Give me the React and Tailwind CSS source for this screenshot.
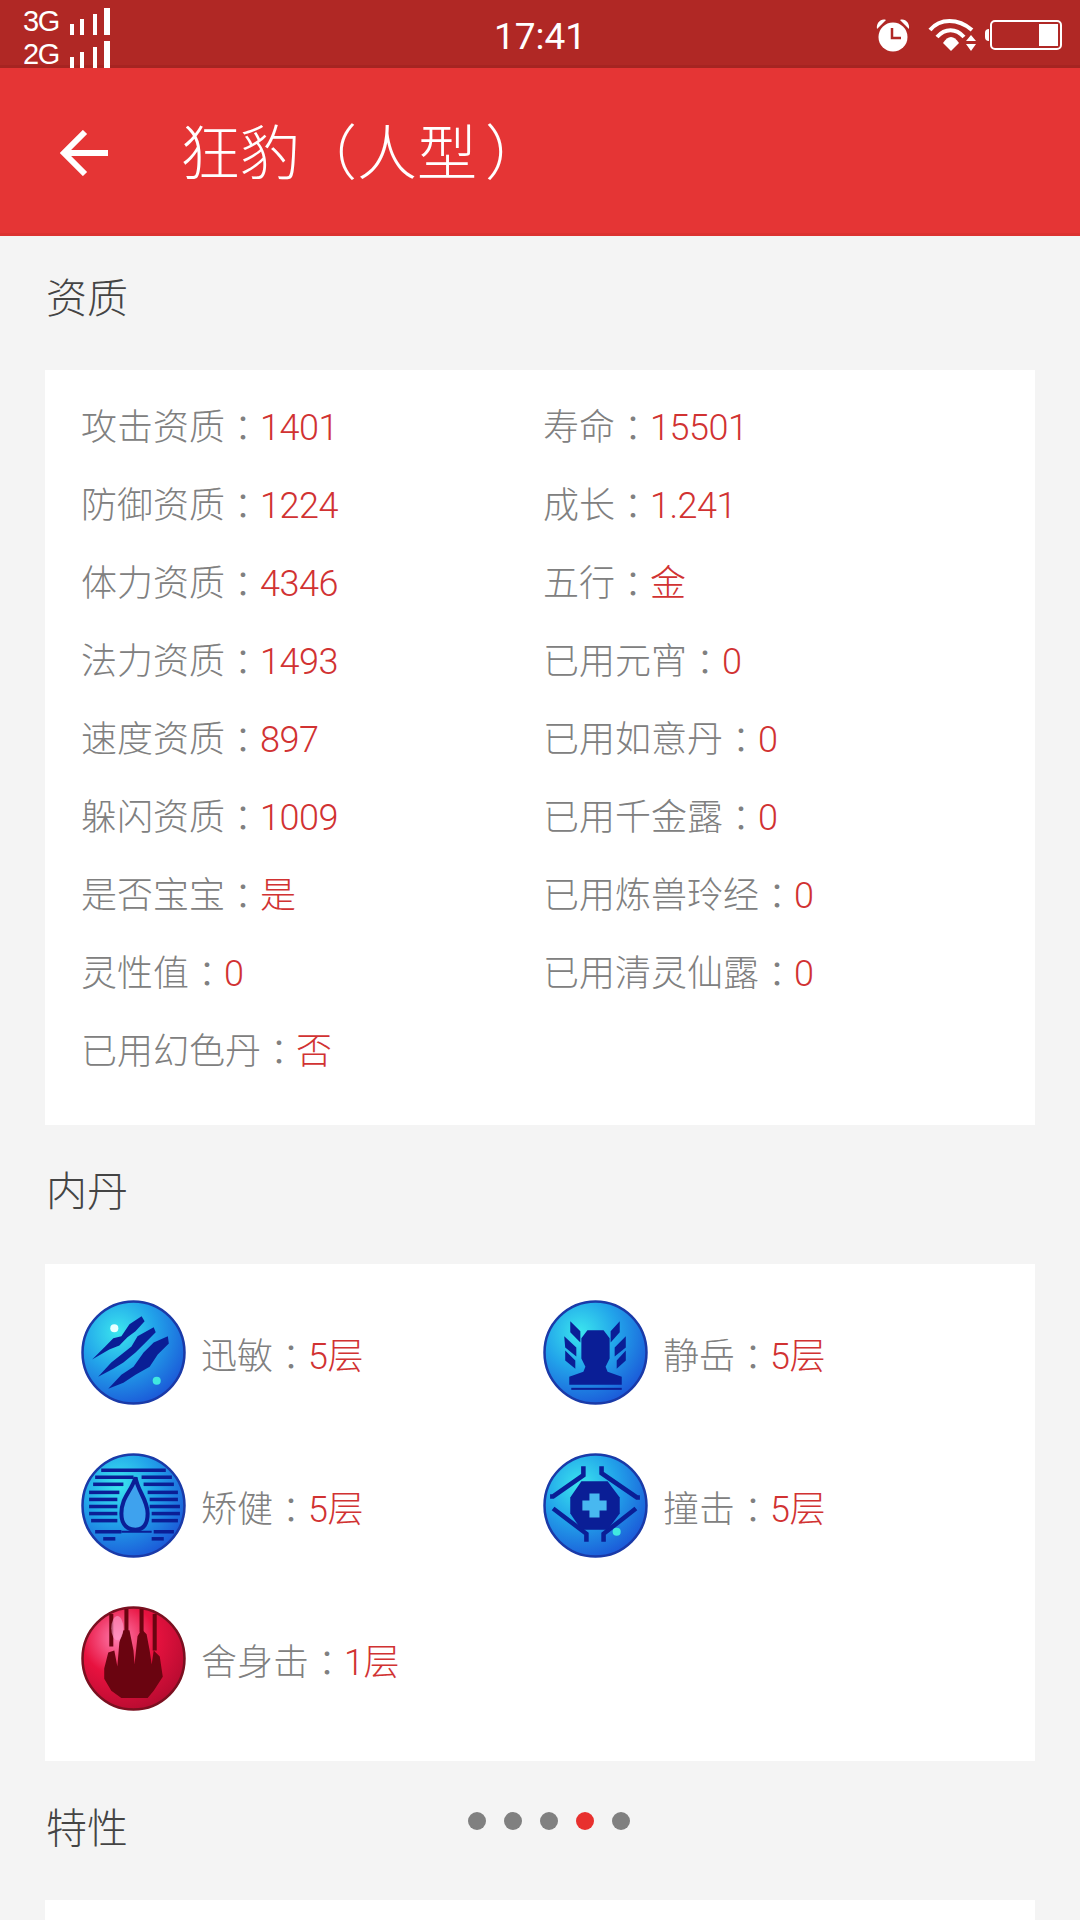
const STATS = [
  ['攻击资质', '1401', '寿命', '15501'],
  ['防御资质', '1224', '成长', '1.241'],
  ['体力资质', '4346', '五行', '金'],
  ['法力资质', '1493', '已用元宵', '0'],
  ['速度资质', '897', '已用如意丹', '0'],
  ['躲闪资质', '1009', '已用千金露', '0'],
  ['是否宝宝', '是', '已用炼兽玲经', '0'],
  ['灵性值', '0', '已用清灵仙露', '0'],
  ['已用幻色丹', '否'],
]

function Pair({ label, value }) {
  return (
    <div className="whitespace-nowrap">
      <span className="text-[#808080]">{label}</span>
      <span className="inline-block translate-y-[2px] -mr-[1px] text-[#808080] [font-family:'Noto_Sans_CJK_TC',sans-serif]">：</span>
      <span className="text-[#d13232] tracking-[-0.5px]">{value}</span>
    </div>
  )
}

function SectionTitle({ children, className = '' }) {
  return (
    <div className={`flex items-center pl-[46px] text-[41px] text-[#444444] ${className}`}>
      {children}
    </div>
  )
}

function Orb({ id, red, children }) {
  const stops = red
    ? ['#ff7fb0', '#e8123f', '#b00a2e']
    : ['#3be6ee', '#22a4ea', '#1a4fd6']
  return (
    <svg viewBox="0 0 104 104" className="w-[105px] h-[105px] shrink-0 blur-[0.6px]">
      <defs>
        <radialGradient id={id} cx="0.35" cy="0.3" r="0.8">
          <stop offset="0" stopColor={stops[0]} />
          <stop offset="0.45" stopColor={stops[1]} />
          <stop offset="1" stopColor={stops[2]} />
        </radialGradient>
      </defs>
      <circle cx="52" cy="52" r="50.5" fill={`url(#${id})`} stroke={red ? '#7a1020' : '#1a3aa8'} strokeWidth="2.5" />
      {children}
    </svg>
  )
}

const NAVY = '#0a1e96'

function ClawIcon() {
  return (
    <Orb id="orb-claw">
      <g fill={NAVY}>
        <path d="M11 59 L24 46 L32 38 L40 36 L48 24 L60 16 L63 21 L54 31 L46 37 L38 45 L28 49 Z" />
        <path d="M17 76 L30 62 L40 54 L50 46 L56 36 L72 27 L74 32 L64 42 L54 52 L42 62 L32 68 Z" />
        <path d="M27 88 L40 74 L52 66 L62 52 L72 42 L86 36 L87 43 L76 54 L68 66 L54 74 L42 82 Z" />
      </g>
      <circle cx="33" cy="28" r="4" fill="#e8ffff" />
      <circle cx="75" cy="80" r="4" fill="#40e8e0" />
    </Orb>
  )
}

function GuardIcon() {
  return (
    <Orb id="orb-guard">
      <g fill={NAVY}>
        <path d="M44 30 H60 L66 38 V58 L62 66 L64 71 L78 76 L78 84 H26 V76 L40 71 L42 66 L38 58 V38 Z" />
        <rect x="28" y="87" width="50" height="2" />
        <path d="M27 21 L37 31 V42 L27 32 Z M21 36 L33 47 V56 L22 47 Z M22 50 L32 60 V68 L22 60 Z" />
        <path d="M76 21 L67 31 V42 L76 32 Z M82 36 L71 47 V56 L82 47 Z M82 50 L73 60 V68 L82 60 Z" />
      </g>
    </Orb>
  )
}

function DropIcon() {
  const lines = [
    [20, 84, 17], [14, 52, 24], [60, 90, 24], [12, 42, 31], [62, 92, 31],
    [8, 38, 39], [66, 96, 39], [8, 36, 46], [68, 96, 46], [8, 36, 53],
    [68, 98, 53], [8, 36, 60], [70, 98, 60], [10, 36, 67], [70, 96, 67],
    [14, 40, 78], [72, 92, 78], [22, 34, 85], [70, 82, 85],
  ]
  return (
    <Orb id="orb-drop">
      <g stroke={NAVY} strokeWidth="3.5">
        {lines.map(([x1, x2, y]) => (
          <line key={`${x1}-${y}`} x1={x1} x2={x2} y1={y} y2={y} />
        ))}
        <line x1="40" x2="70" y1="78" y2="78" strokeWidth="2" />
      </g>
      <path d="M54 24 C50 38 40 44 40 60 C40 72 47 76 54 76 C62 76 66 70 66 60 C66 46 56 38 54 24 Z" fill="#3ea2ee" stroke={NAVY} strokeWidth="4" />
    </Orb>
  )
}

function ShieldIcon() {
  return (
    <Orb id="orb-shield">
      <g fill="none" stroke={NAVY} strokeWidth="4.5">
        <path d="M40 13 V22 L10 43 H7" />
        <path d="M58 13 V20 L93 44 H96" />
        <path d="M10 55 L43 80 V88" />
        <path d="M92 55 L60 80 V88" />
      </g>
      <path d="M38 28 H64 L76 44 V60 L64 76 H38 L27 60 V44 Z" fill={NAVY} />
      <path d="M46 40 H56 V47 H63 V57 H56 V64 H46 V57 H39 V47 H46 Z" fill="#48b8f0" />
      <circle cx="73" cy="78" r="4" fill="#40e8e0" />
    </Orb>
  )
}

function PawIcon() {
  return (
    <Orb id="orb-paw" red>
      <g fill="#6a0410">
        <path d="M28 8 H32 V40 H28 Z M43 3 H47 V26 H43 Z M58 3 H62 V26 H58 Z M71 8 H75 V44 H71 Z" />
        <path d="M23 62 L27 46 L33 44 L36 60 L38 36 L42 24 L48 24 L52 44 L53 58 L56 30 L60 23 L65 28 L68 44 L70 58 L72 44 L78 50 L81 70 L72 84 L66 91 H40 L30 84 L23 72 Z" />
      </g>
      <ellipse cx="36" cy="22" rx="6" ry="12" fill="#ff9ecb" opacity="0.6" />
    </Orb>
  )
}

const SKILLS = [
  { name: '迅敏', level: '5层', Icon: ClawIcon },
  { name: '静岳', level: '5层', Icon: GuardIcon },
  { name: '矫健', level: '5层', Icon: DropIcon },
  { name: '撞击', level: '5层', Icon: ShieldIcon },
  { name: '舍身击', level: '1层', Icon: PawIcon },
]

function StatusBar() {
  return (
    <div className="h-[68px] bg-[#b02825] border-b-[3px] border-[#a62421] grid grid-cols-[1fr_auto_1fr] items-center text-white">
      <div className="pl-[23px] pt-[2px] flex flex-col text-[29px] leading-[27px] tracking-[-1.5px] font-normal [font-family:'Liberation_Sans',sans-serif]">
        {['3G', '2G'].map((net) => (
          <div key={net} className="flex items-end gap-[9px] h-[33px]">
            <span className="w-[38px]">{net}</span>
            <svg viewBox="0 0 40 27" className="w-[40px] h-[27px] fill-white">
              <rect x="0" y="16" width="4" height="11" />
              <rect x="10" y="11" width="4" height="16" />
              <rect x="23" y="6" width="4" height="21" />
              <rect x="34" y="0" width="6" height="27" />
            </svg>
          </div>
        ))}
      </div>
      <div className="text-[37px] font-normal pt-[6px] [font-family:Roboto,sans-serif]">17:41</div>
      <div className="flex items-center justify-end pr-[18px] pt-[2px]">
        <svg viewBox="0 0 36 34" className="w-[36px] h-[34px] mr-[17px]">
          <circle cx="18" cy="19" r="14.5" fill="#fff" />
          <path d="M2 11 C1 5 6 0 11 2 Z M34 11 C35 5 30 0 25 2 Z" fill="#fff" />
          <path d="M17 10 V20 H26" fill="none" stroke="#b02825" strokeWidth="2.5" />
        </svg>
        <svg viewBox="0 0 48 34" className="w-[48px] h-[34px] mr-[9px]">
          <g fill="none" stroke="#fff" strokeWidth="4">
            <path d="M2 12 C12 0 30 0 44 12" />
            <path d="M9 19 C17 10 28 10 36 19" />
          </g>
          <path d="M15 25 C20 17 26 17 31 25 L23 33 Z" fill="#fff" />
          <path d="M43 17 L48 23 H38 Z M38 26 H48 L43 33 Z" fill="#fff" />
        </svg>
        <div className="w-[4px] h-[12px] bg-white rounded-l-full mr-[1px]" />
        <div className="w-[72px] h-[30px] border-2 border-white rounded-[5px] flex justify-end items-stretch p-[2px]">
          <div className="w-[19px] bg-white" />
        </div>
      </div>
    </div>
  )
}

function AppBar() {
  return (
    <div className="h-[168px] bg-[#e53535] border-b-[3px] border-[#dc3230] flex items-center text-white">
      <svg viewBox="0 0 48 46" className="w-[48px] h-[46px] ml-[60px] mr-[72px] mt-[4px]">
        <path d="M48 23 H5 M25 2 L4 23 L25 44" fill="none" stroke="#fff" strokeWidth="6" />
      </svg>
      <span className="text-[60px] leading-none pt-[8px]">
        狂豹<span className="-ml-[3px]">（</span>人型<span className="ml-[8px]">）</span>
      </span>
    </div>
  )
}

export default function App() {
  return (
    <div className="h-[1920px] w-[1080px] overflow-hidden flex flex-col bg-[#f4f4f4] font-light [font-family:Roboto,'Noto_Sans_CJK_SC',sans-serif]">
      <StatusBar />
      <AppBar />

      <SectionTitle className="h-[134px] pb-[7px]">资质</SectionTitle>
      <div className="mx-[45px] bg-white pt-[17px] pb-[36px] pl-[36px] grid grid-cols-[462px_1fr] auto-rows-[78px] items-center text-[36px]">
        {STATS.map(([a, b, c, d]) => (
          <div key={a} className="contents">
            <Pair label={a} value={b} />
            {c ? <Pair label={c} value={d} /> : <div />}
          </div>
        ))}
      </div>

      <SectionTitle className="h-[139px] pb-[3px]">内丹</SectionTitle>
      <div className="mx-[45px] bg-white pt-[36px] pb-[50px] pl-[36px] grid grid-cols-[462px_1fr] gap-y-[48px] text-[36px]">
        {SKILLS.map(({ name, level, Icon }) => (
          <div key={name} className="flex items-center gap-[15px]">
            <Icon />
            <div className="pt-[5px]">
              <Pair label={name} value={level} />
            </div>
          </div>
        ))}
      </div>

      <div className="relative">
        <SectionTitle className="h-[139px] pb-[2px]">特性</SectionTitle>
        <div className="absolute left-[468px] top-[51px] flex gap-[18px]">
          {[0, 1, 2, 3, 4].map((i) => (
            <span key={i} className={`w-[18px] h-[18px] rounded-full ${i === 3 ? 'bg-[#e8302e]' : 'bg-[#808080]'}`} />
          ))}
        </div>
      </div>
      <div className="mx-[45px] bg-white flex-1" />
    </div>
  )
}
